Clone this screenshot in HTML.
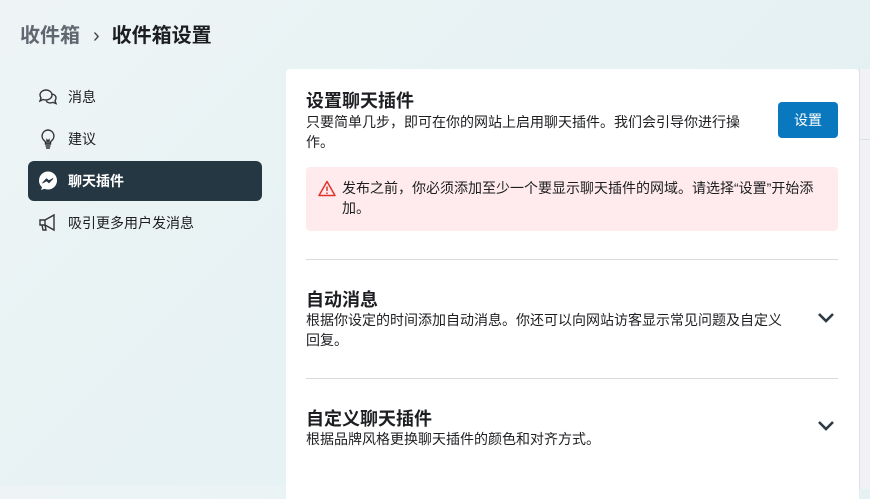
<!DOCTYPE html>
<html><head><meta charset="utf-8"><style>
*{margin:0;padding:0;box-sizing:border-box}
body{width:870px;height:486px;overflow:hidden;font-family:"Liberation Sans","Noto Sans CJK SC",sans-serif;background:linear-gradient(135deg,#eef4f5 0%,#e6f2f4 50%,#e4eef2 100%);position:relative;color:#1c1e21}
.bc{position:absolute;left:20px;top:21px;font-size:20px;font-weight:bold;line-height:30px}
.bc .g{color:#606770}
.bc .s{color:#444;font-weight:normal;margin:0 12px 0 13px}
.item{position:absolute;left:28px;width:234px;height:40px;display:flex;align-items:center;font-size:14px;color:#1c1e21}
.item svg{position:absolute;left:9px}
.item span{position:absolute;left:40px}
.act{background:#263744;border-radius:6px;color:#fff;font-weight:bold}
.card{position:absolute;left:286px;top:69px;width:573px;height:430px;background:#fff;border-radius:4px 4px 0 0}
.strip{position:absolute;left:859px;top:69px;width:11px;height:420px;background:#f0f2f5;border-left:1px solid #dcdfe3}
.strip i{position:absolute;top:70px;left:0;width:11px;height:1px;background:#dcdfe3}
h2{font-size:18px;font-weight:bold;line-height:22px}
p{font-size:14px;line-height:20px;color:#1c1e21}
.btn{position:absolute;left:492px;top:33px;width:60px;height:36px;background:#0a78be;color:#fff;border-radius:4px;font-size:14px;text-align:center;line-height:36px}
.warn{position:absolute;left:20px;top:98px;width:532px;height:64px;background:#ffebed;border-radius:4px}
.warn p{position:absolute;left:36px;top:11px;width:482px}
.hr{position:absolute;left:20px;width:532px;height:1px;background:#d6d9dd}
.chev{position:absolute;left:530px}
</style></head><body>
<div class="bc"><span class="g">收件箱</span><span class="s">›</span>收件箱设置</div>

<div class="item" style="top:77px"><svg width="22" height="22" viewBox="0 0 22 22" fill="none" stroke="#333" stroke-width="1.4"><path d="M3 9c0-3 3-5 6-5s6 2 6 5-3 5-6 5c-1 0-2 0-3-.5L3 15l1-3C3.4 11 3 10 3 9z"/><path d="M15 8c2.5.5 4 2 4 4 0 1-.4 2-1 2.6l1 3-3-1.2c-1 .4-2 .6-3 .5-1.5 0-3-.8-3.8-1.9"/></svg><span>消息</span></div>
<div class="item" style="top:119px"><svg width="22" height="22" viewBox="0 0 22 22" fill="none" stroke="#333" stroke-width="1.4"><path d="M11 2a6 6 0 0 0-3.5 10.8c.6.5 1 1.2 1 2V16h5v-1.2c0-.8.4-1.5 1-2A6 6 0 0 0 11 2z"/><path d="M8.5 18h5M9 20h4M10 16v-4l1 1 1-1v4"/></svg><span>建议</span></div>
<div class="item act" style="top:161px"><svg width="22" height="22" viewBox="0 0 22 22"><circle cx="11" cy="10.5" r="9" fill="#fff"/><path d="M4 20l1.5-4 4 2z" fill="#fff"/><path d="M5.5 13l4-4.3 2.3 2 4.2-2.2-4 4.3-2.3-2z" fill="#263744" stroke="#263744" stroke-width="0.8" stroke-linejoin="round"/></svg><span>聊天插件</span></div>
<div class="item" style="top:203px"><svg width="22" height="22" viewBox="0 0 22 22" fill="none" stroke="#333" stroke-width="1.4"><path d="M3 8h5l9-5v15l-9-5H3z"/><path d="M5 13l1 5h3l-1-5M8 8v5"/></svg><span>吸引更多用户发消息</span></div>

<div class="card">
 <h2 style="position:absolute;left:20px;top:21px">设置聊天插件</h2>
 <p style="position:absolute;left:20px;top:43px;width:440px">只要简单几步，即可在你的网站上启用聊天插件。我们会引导你进行操作。</p>
 <div class="btn">设置</div>
 <div class="warn"><svg style="position:absolute;left:12px;top:13px" width="18" height="17" viewBox="0 0 18 17" fill="none" stroke="#e0342b" stroke-width="1.5"><path d="M9 1.5L1 15.5h16z" stroke-linejoin="round"/><path d="M9 6.5v4.5M9 12.5v1.5"/></svg><p>发布之前，你必须添加至少一个要显示聊天插件的网域。请选择“设置”开始添加。</p></div>
 <div class="hr" style="top:190px"></div>
 <h2 style="position:absolute;left:20px;top:220px">自动消息</h2>
 <p style="position:absolute;left:20px;top:241px;width:482px">根据你设定的时间添加自动消息。你还可以向网站访客显示常见问题及自定义回复。</p>
 <svg class="chev" style="top:242px" width="20" height="14" viewBox="0 0 20 14"><path d="M3 3l7 7 7-7" fill="none" stroke="#2c3a45" stroke-width="2.6"/></svg>
 <div class="hr" style="top:309px"></div>
 <h2 style="position:absolute;left:20px;top:339px">自定义聊天插件</h2>
 <p style="position:absolute;left:20px;top:360px;width:480px">根据品牌风格更换聊天插件的颜色和对齐方式。</p>
 <svg class="chev" style="top:350px" width="20" height="14" viewBox="0 0 20 14"><path d="M3 3l7 7 7-7" fill="none" stroke="#2c3a45" stroke-width="2.6"/></svg>
</div>
<div class="strip"><i></i></div>
</body></html>
